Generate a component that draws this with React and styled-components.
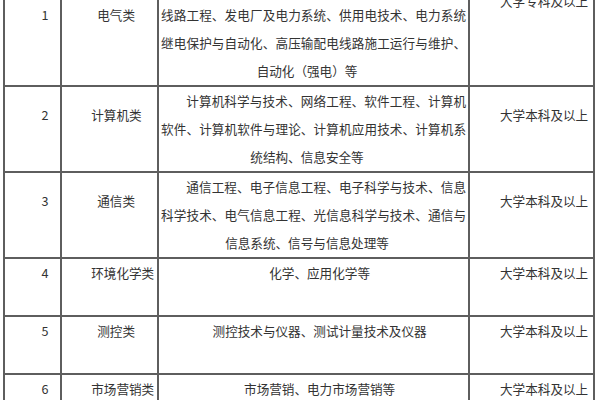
import React from "react";
import styled, { createGlobalStyle } from "styled-components";

const Global = createGlobalStyle`
  html, body { margin: 0; padding: 0; background: #fff; overflow: hidden; }
  body { font-family: "Noto Sans CJK SC", "Noto Sans", sans-serif; }
`;

const Table = styled.table`
  border-collapse: collapse;
  table-layout: fixed;
  width: 590px;
  margin: -29px 0 0 3px;
  color: #333;
  font-size: 12.6px;
  line-height: 28px;
`;

const Cell = styled.td`
  border: 2px solid #5e5e5e;
  padding: ${(p) => p.$pad || "0"};
  vertical-align: middle;
  white-space: ${(p) => (p.$nowrap ? "nowrap" : "normal")};
  overflow: visible;
`;

const Para = styled.div`
  padding-bottom: ${(p) => (p.$gap || 0) * 28}px;
`;

const Line = styled.span`
  display: block;
  text-align: center;
  text-align-last: ${(p) => (p.$fill ? "justify" : "center")};
  padding-right: ${(p) => (p.$shift ? 13 : 0)}px;
  &:first-child { text-indent: 2em; }
`;

const rows = [
  {
    no: "1",
    cat: "电气类",
    desc: [
      "电气工程与自动化、电力系统及其自动化、输配电",
      "线路工程、发电厂及电力系统、供用电技术、电力系统",
      "继电保护与自动化、高压输配电线路施工运行与维护、",
      "自动化（强电）等",
    ],
    edu: "大学专科及以上",
    eduGap: 2,
  },
  {
    no: "2",
    cat: "计算机类",
    desc: [
      "计算机科学与技术、网络工程、软件工程、计算机",
      "软件、计算机软件与理论、计算机应用技术、计算机系",
      "统结构、信息安全等",
    ],
    edu: "大学本科及以上",
  },
  {
    no: "3",
    cat: "通信类",
    desc: [
      "通信工程、电子信息工程、电子科学与技术、信息",
      "科学技术、电气信息工程、光信息科学与技术、通信与",
      "信息系统、信号与信息处理等",
    ],
    edu: "大学本科及以上",
  },
  { no: "4", cat: "环境化学类", desc: ["化学、应用化学等"], edu: "大学本科及以上" },
  { no: "5", cat: "测控类", desc: ["测控技术与仪器、测试计量技术及仪器"], edu: "大学本科及以上" },
  { no: "6", cat: "市场营销类", desc: ["市场营销、电力市场营销等"], edu: "大学本科及以上" },
];

export default function App() {
  return (
    <>
      <Global />
      <Table>
        <colgroup>
          <col style={{ width: 57 }} />
          <col style={{ width: 97 }} />
          <col style={{ width: 311 }} />
          <col style={{ width: 125 }} />
        </colgroup>
        <tbody>
          {rows.map((r) => {
            const multi = r.desc.length > 1;
            return (
              <tr key={r.no}>
                <Cell>
                  <Para $gap={1}>
                    <Line>{r.no}</Line>
                  </Para>
                </Cell>
                <Cell $pad="0 16px 0 4px" $nowrap>
                  <Para $gap={1}>
                    <Line>{r.cat}</Line>
                  </Para>
                </Cell>
                <Cell $pad="0 2px">
                  <Para $gap={multi ? 0 : 1}>
                    {r.desc.map((l, i) => {
                      const last = i === r.desc.length - 1;
                      return (
                        <Line key={i} $fill={!last} $shift={last}>
                          {l}
                        </Line>
                      );
                    })}
                  </Para>
                </Cell>
                <Cell>
                  <Para $gap={r.eduGap || 1}>
                    <Line>{r.edu}</Line>
                  </Para>
                </Cell>
              </tr>
            );
          })}
        </tbody>
      </Table>
    </>
  );
}
